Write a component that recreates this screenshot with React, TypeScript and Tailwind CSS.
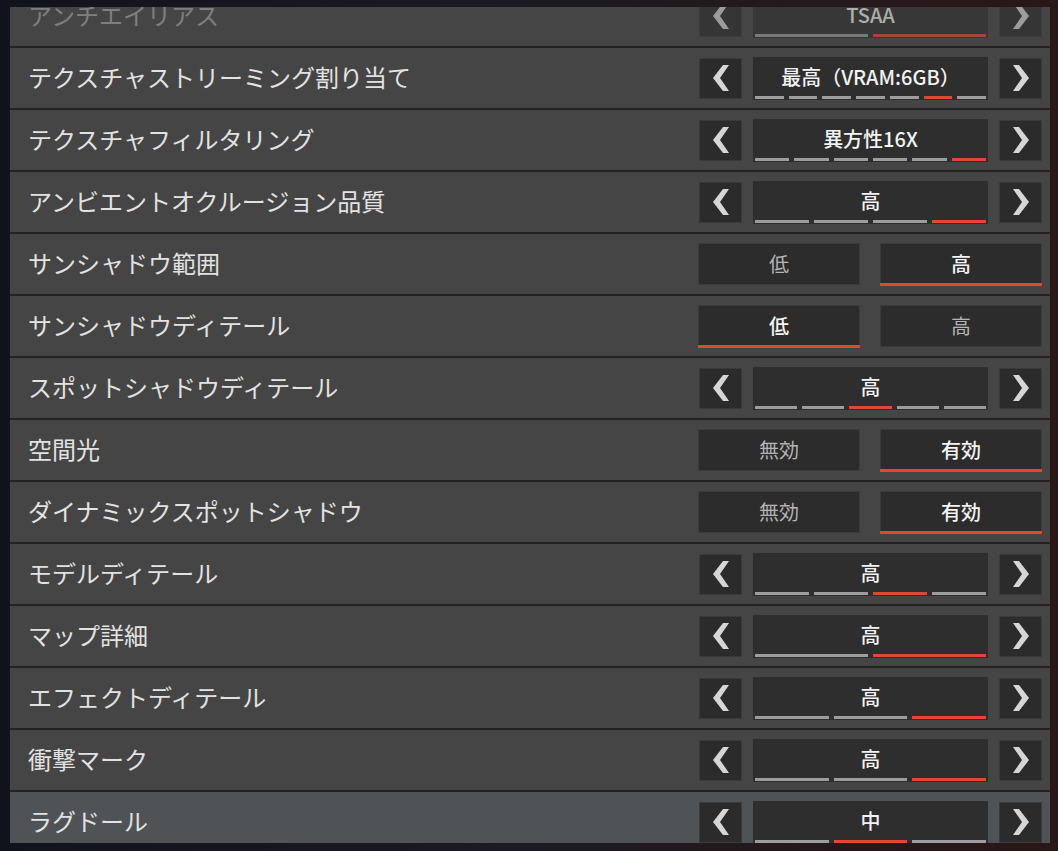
import React from "react";

type Row =
  | { label: string; kind: "cycle"; value: string; segs: number; sel: number }
  | { label: string; kind: "toggle"; options: [string, string]; sel: number };

const rows: Row[] = [
  { label: "アンチエイリアス", kind: "cycle", value: "TSAA", segs: 2, sel: 1 },
  { label: "テクスチャストリーミング割り当て", kind: "cycle", value: "最高（VRAM:6GB）", segs: 7, sel: 5 },
  { label: "テクスチャフィルタリング", kind: "cycle", value: "異方性16X", segs: 6, sel: 5 },
  { label: "アンビエントオクルージョン品質", kind: "cycle", value: "高", segs: 4, sel: 3 },
  { label: "サンシャドウ範囲", kind: "toggle", options: ["低", "高"], sel: 1 },
  { label: "サンシャドウディテール", kind: "toggle", options: ["低", "高"], sel: 0 },
  { label: "スポットシャドウディテール", kind: "cycle", value: "高", segs: 5, sel: 2 },
  { label: "空間光", kind: "toggle", options: ["無効", "有効"], sel: 1 },
  { label: "ダイナミックスポットシャドウ", kind: "toggle", options: ["無効", "有効"], sel: 1 },
  { label: "モデルディテール", kind: "cycle", value: "高", segs: 4, sel: 2 },
  { label: "マップ詳細", kind: "cycle", value: "高", segs: 2, sel: 1 },
  { label: "エフェクトディテール", kind: "cycle", value: "高", segs: 3, sel: 2 },
  { label: "衝撃マーク", kind: "cycle", value: "高", segs: 3, sel: 2 },
  { label: "ラグドール", kind: "cycle", value: "中", segs: 3, sel: 1 },
];

function Chevron({ dir }: { dir: "left" | "right" }) {
  const pts = dir === "left" ? "0,13 10,0 16,0 7,13 16,26 10,26" : "16,13 6,0 0,0 9,13 0,26 6,26";
  return (
    <svg width="16" height="26" viewBox="0 0 16 26">
      <polygon points={pts} fill="#d6d6d6" />
    </svg>
  );
}

function ArrowBox({ dir }: { dir: "left" | "right" }) {
  return (
    <div className="w-[43px] h-[41px] bg-[#2b2b2b] border border-[#3a3a3a] flex items-center justify-center">
      <Chevron dir={dir} />
    </div>
  );
}

function Cycle({ value, segs, sel }: { value: string; segs: number; sel: number }) {
  return (
    <div className="flex items-center gap-[11px]">
      <ArrowBox dir="left" />
      <div className="w-[235px] h-[43px] bg-[#2e2e2e] flex flex-col">
        <div className="flex-1 flex items-center justify-center pt-[2px] text-[20px] leading-none font-medium text-[#f2f2f2]">
          {value}
        </div>
        <div className="flex gap-[5px] px-[2px] pb-[1px]">
          {Array.from({ length: segs }).map((_, i) => (
            <div key={i} className={`flex-1 h-[3px] ${i === sel ? "bg-[#e2472f]" : "bg-[#9d9d9d]"}`} />
          ))}
        </div>
      </div>
      <ArrowBox dir="right" />
    </div>
  );
}

function Toggle({ options, sel }: { options: [string, string]; sel: number }) {
  return (
    <div className="w-[344px] flex justify-between">
      {options.map((o, i) => (
        <div
          key={o}
          className={`relative w-[162px] h-[42px] bg-[#2c2c2c] border border-[#3b3b3b] flex items-center justify-center text-[20px] leading-none ${
            i === sel ? "text-[#f4f4f4] font-medium" : "text-[#b4b4b4]"
          }`}
        >
          {o}
          {i === sel && <div className="absolute left-[-1px] right-[-1px] bottom-[-2px] h-[3px] bg-[#e2472f]" />}
        </div>
      ))}
    </div>
  );
}

export default function App() {
  return (
    <div
      className="w-[1058px] h-[851px] overflow-hidden bg-gradient-to-r from-[#11131c] via-[#1c1a22] to-[#2a1717]"
      style={{ fontFamily: '"Noto Sans CJK JP", "Noto Sans", sans-serif' }}
    >
      <div className="mt-[7px] ml-[10px] w-[1040px] h-[836px] overflow-hidden">
        <div className="mt-[-21px] flex flex-col gap-[2px] bg-[#242224]">
          {rows.map((r, idx) => {
            const last = idx === rows.length - 1;
            const dim = idx === 0;
            return (
              <div
                key={r.label}
                className={`h-[60px] flex items-center justify-between pl-[18px] pr-[8px] ${
                  last ? "bg-[#505356]" : "bg-[#454545]"
                }`}
              >
                <div className={`text-[24px] leading-none pb-[2px] ${dim ? "text-[#8e8e8e] opacity-80" : "text-[#e2e2e2]"}`}>
                  {r.label}
                </div>
                <div className={dim ? "opacity-60" : ""}>
                  {r.kind === "cycle" ? (
                    <Cycle value={r.value} segs={r.segs} sel={r.sel} />
                  ) : (
                    <Toggle options={r.options} sel={r.sel} />
                  )}
                </div>
              </div>
            );
          })}
        </div>
      </div>
    </div>
  );
}
